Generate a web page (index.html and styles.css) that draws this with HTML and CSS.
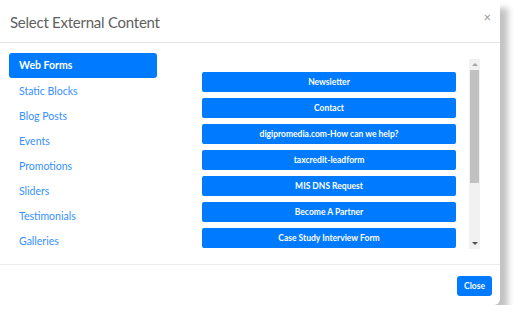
FILE: index.html
```html
<!DOCTYPE html>
<html>
<head>
<meta charset="utf-8">
<link rel="stylesheet" href="styles.css">
</head>
<body>
<div class="modal">
  <div class="modal-header">
    <h1 class="title">Select External Content</h1>
    <span class="close-x">×</span>
  </div>
  <div class="modal-body">
    <ul class="nav">
      <li class="nav-item active">Web Forms</li>
      <li class="nav-item">Static Blocks</li>
      <li class="nav-item">Blog Posts</li>
      <li class="nav-item">Events</li>
      <li class="nav-item">Promotions</li>
      <li class="nav-item">Sliders</li>
      <li class="nav-item">Testimonials</li>
      <li class="nav-item">Galleries</li>
    </ul>
    <div class="panel">
      <div class="list">
        <button class="item">Newsletter</button>
        <button class="item">Contact</button>
        <button class="item">digipromedia.com-How can we help?</button>
        <button class="item">taxcredit-leadform</button>
        <button class="item">MIS DNS Request</button>
        <button class="item">Become A Partner</button>
        <button class="item">Case Study Interview Form</button>
      </div>
      <div class="scrollbar">
        <div class="arrow up"></div>
        <div class="track"><div class="thumb"></div></div>
        <div class="arrow down"></div>
      </div>
    </div>
  </div>
  <div class="modal-footer">
    <button class="btn-close">Close</button>
  </div>
</div>
</body>
</html>
```

FILE: styles.css
```css
* { box-sizing: border-box; }
html, body { margin: 0; padding: 0; background: #fff; }
body { font-family: Lato, "Open Sans", sans-serif; }

.modal {
  width: 500px;
  height: 305px;
  background: #fff;
  border-radius: 0 0 6px 0;
  box-shadow: 8px 8px 6px rgba(0,0,0,0.24);
  display: flex;
  flex-direction: column;
}

.modal-header {
  height: 43px;
  border-bottom: 1px solid #e4e4e4;
  display: flex;
  align-items: flex-start;
  justify-content: space-between;
  padding: 0 9px 0 10px;
}
.title {
  margin: 12px 0 0;
  font-size: 15px;
  font-weight: 400;
  letter-spacing: -0.25px;
  color: #5f5f5f;
  line-height: 20px;
}
.close-x {
  margin-top: 9px;
  font-size: 13px;
  color: #999;
  line-height: 16px;
}

.modal-body {
  height: 222px;
  border-bottom: 1px solid #ececec;
  display: flex;
  padding: 10px 0 0 9px;
}

.nav {
  list-style: none;
  margin: 0;
  padding: 0;
  width: 148px;
  display: flex;
  flex-direction: column;
}
.nav-item {
  height: 25px;
  line-height: 25px;
  padding: 1px 0 0 10px;
  font-size: 10.5px;
  color: #3690ff;
  border-radius: 3px;
}
.nav-item.active {
  background: #007bff;
  color: #fff;
  font-weight: 700;
  padding-top: 0;
}

.panel {
  margin-left: 45px;
  margin-top: 6px;
  height: 190px;
  display: flex;
}
.list {
  width: 267px;
  padding: 13px 13px 0 0;
  overflow: hidden;
  display: flex;
  flex-direction: column;
  gap: 6px;
}
.item {
  flex: none;
  height: 20px;
  width: 254px;
  background: #007bff;
  border: none;
  border-radius: 2px;
  color: #fff;
  font-family: Lato, sans-serif;
  font-size: 8.5px;
  font-weight: 700;
  padding: 0;
}

.scrollbar {
  width: 11px;
  background: #f1f1f1;
  display: flex;
  flex-direction: column;
  align-items: center;
}
.arrow {
  width: 0; height: 0;
  border-left: 3px solid transparent;
  border-right: 3px solid transparent;
}
.arrow.up { border-bottom: 3px solid #a3a3a3; margin: 4px 0 4px; }
.arrow.down { border-top: 3px solid #505050; margin: 4px 0 4px; }
.track { flex: 1; width: 100%; padding: 0 1px; }
.thumb { height: 113px; background: #c1c1c1; }

.modal-footer {
  flex: 1;
  display: flex;
  justify-content: flex-end;
  align-items: flex-start;
  padding: 11px 8px 0 0;
}
.btn-close {
  width: 35px;
  height: 20px;
  background: #007bff;
  color: #fff;
  border: none;
  border-radius: 3px;
  font-family: Lato, sans-serif;
  font-size: 8.5px;
  font-weight: 700;
  padding: 0;
}
```
